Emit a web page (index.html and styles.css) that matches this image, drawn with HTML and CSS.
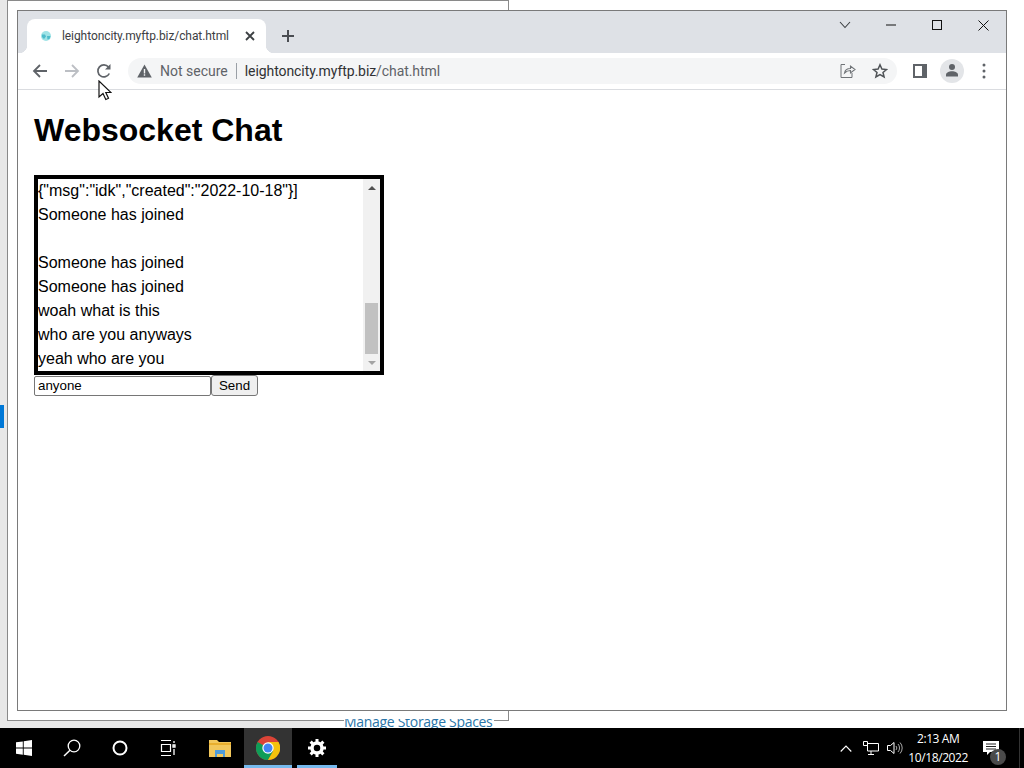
FILE: index.html
```html
<!DOCTYPE html>
<html lang="en">
<head>
<meta charset="utf-8">
<title>Websocket Chat</title>
<link rel="stylesheet" href="styles.css">
</head>
<body>
<div class="screen">
  <main class="desktop">
    <div class="backstrip"></div>
    <div class="backwin"></div>
    <div class="backclip"><a class="backlink">Manage Storage Spaces</a></div>
    <div class="backmark"></div>
    <section class="chrome">
      <header class="titlebar">
        <div class="tab">
          <svg class="favicon" width="16" height="16" viewBox="0 0 16 16"><circle cx="8" cy="8" r="5" fill="#9fe3e6"/><path d="M4 6.500h3l1 2-2 2.500-2-2zM9 8h3.500l-1 3-2 .5z" fill="#4dbccb"/></svg>
          <span class="tabtitle">leightoncity.myftp.biz/chat.html</span>
          <svg class="tabclose" width="10" height="10" viewBox="0 0 10 10"><path d="M1 1l8 8M9 1L1 9" stroke="#3c4043" stroke-width="1.800"/></svg>
        </div>
        <svg class="newtab" width="14" height="14" viewBox="0 0 14 14"><path d="M7 1v12M1 7h12" stroke="#4a4d52" stroke-width="2"/></svg>
        <div class="winctrls">
          <span class="winbtn"><svg width="12" height="8" viewBox="0 0 12 8"><path d="M1 1l5 5.500L11 1" fill="none" stroke="#3c4043" stroke-width="1.100"/></svg></span>
          <span class="winbtn"><svg width="10" height="2" viewBox="0 0 10 2"><path d="M0 1h10" stroke="#111" stroke-width="1"/></svg></span>
          <span class="winbtn"><svg width="10" height="10" viewBox="0 0 10 10"><rect x=".5" y=".5" width="9" height="9" fill="none" stroke="#111"/></svg></span>
          <span class="winbtn"><svg width="11" height="11" viewBox="0 0 11 11"><path d="M.5.500l10 10M10.500.500l-10 10" stroke="#111" stroke-width="1"/></svg></span>
        </div>
      </header>
      <nav class="toolbar">
        <span class="tool"><svg width="16" height="16" viewBox="0 0 16 16"><path d="M15 8H2M8 2L2 8l6 6" fill="none" stroke="#5f6368" stroke-width="1.800"/></svg></span>
        <span class="tool"><svg width="16" height="16" viewBox="0 0 16 16"><path d="M1 8h13M8 2l6 6-6 6" fill="none" stroke="#bcbfc4" stroke-width="1.800"/></svg></span>
        <span class="tool"><svg width="16" height="16" viewBox="0 0 16 16"><path d="M13.300 10.500A6 6 0 1 1 12.500 4" fill="none" stroke="#5f6368" stroke-width="1.700"/><path d="M14.500 1v5.500H9z" fill="#5f6368"/></svg></span>
        <div class="omnibox">
          <svg class="warn" width="15" height="14" viewBox="0 0 15 14"><path d="M7.500 0.500L14.800 13.500H.2z" fill="#5f6368"/><path d="M6.800 5h1.400v4.500H6.800zM6.800 10.300h1.400v1.500H6.800z" fill="#f4f5f6"/></svg>
          <span class="notsecure">Not secure</span>
          <span class="divider"></span>
          <span class="url"><b class="host">leightoncity.myftp.biz</b>/chat.html</span>
          <span class="tool"><svg width="16" height="16" viewBox="0 0 16 16"><path d="M5 1.500H1v13h11V10" fill="none" stroke="#6f7377" stroke-width="1"/><path d="M4.500 10c.5-3 3-4.500 6-4.500V3l4.500 3.500-4.500 3.500V7.500C8 7.500 6 8.500 4.500 10z" fill="none" stroke="#6f7377" stroke-width="1.100"/></svg></span>
          <span class="tool"><svg width="16" height="16" viewBox="0 0 16 16"><path d="M8 1.800l1.900 4.300 4.600.4-3.500 3 1.100 4.500L8 11.600 3.900 14 5 9.500l-3.500-3 4.600-.4z" fill="none" stroke="#4f5357" stroke-width="1.500"/></svg></span>
        </div>
        <span class="tool"><svg width="14" height="14" viewBox="0 0 14 14"><path d="M0 0h14v14H0z" fill="#5f6368"/><path d="M2 2h7v10H2z" fill="#fff"/></svg></span>
        <span class="tool"><span class="avatar"><svg width="14" height="13" viewBox="0 0 14 13"><circle cx="7" cy="3" r="3" fill="#5f6368"/><path d="M1 12.500v-1.500C1 8.500 4 7.300 7 7.300s6 1.200 6 3.700v1.500z" fill="#5f6368"/></svg></span></span>
        <span class="tool"><svg width="4" height="16" viewBox="0 0 4 16"><circle cx="2" cy="2" r="1.500" fill="#5f6368"/><circle cx="2" cy="8" r="1.500" fill="#5f6368"/><circle cx="2" cy="14" r="1.500" fill="#5f6368"/></svg></span>
      </nav>
      <article class="page">
        <h1 class="heading">Websocket Chat</h1>
        <div class="chatbox">
          <div class="messages">
            <div class="msg">{"msg":"idk","created":"2022-10-18"}]</div>
            <div class="msg">Someone has joined</div>
            <div class="msg">&nbsp;</div>
            <div class="msg">Someone has joined</div>
            <div class="msg">Someone has joined</div>
            <div class="msg">woah what is this</div>
            <div class="msg">who are you anyways</div>
            <div class="msg">yeah who are you</div>
          </div>
          <div class="scrollbar">
            <span class="arrow-up"></span>
            <span class="track"><span class="thumb"></span></span>
            <span class="arrow-down"></span>
          </div>
        </div>
        <form class="sendrow">
          <input class="textin" type="text" value="anyone">
          <button class="sendbtn" type="button">Send</button>
        </form>
      </article>
    </section>
    <svg class="cursor" width="14" height="21" viewBox="0 0 14 21"><path d="M1 1v16l4-3.500 2.800 6 2.700-1.200-2.700-5.800H13z" fill="#fff" stroke="#111" stroke-width="1.200"/></svg>
  </main>
  <footer class="taskbar">
    <span class="task"><svg width="16" height="16" viewBox="0 0 16 16"><path d="M0 2.300l6.800-.9v6.200H0zM7.700 1.300L16 0v7.600H7.700zM0 8.500h6.800v6.200L0 13.700zM7.700 8.500H16V16l-8.300-1.200z" fill="#fff"/></svg></span>
    <span class="task"><svg width="18" height="18" viewBox="0 0 18 18"><circle cx="11" cy="7" r="5.800" fill="none" stroke="#fff" stroke-width="1.300"/><path d="M7 11.300L1 17" stroke="#fff" stroke-width="1.500"/></svg></span>
    <span class="task"><svg width="16" height="16" viewBox="0 0 16 16"><circle cx="8" cy="8" r="6.500" fill="none" stroke="#fff" stroke-width="2"/></svg></span>
    <span class="task"><svg width="16" height="16" viewBox="0 0 16 16"><path d="M1 .5h10M1 15.500h10M1.500 4.500h9v7h-9z" fill="none" stroke="#fff" stroke-width="1.200"/><path d="M14 1v2M13 5h2v2h-2zM14 9v6" fill="none" stroke="#fff" stroke-width="1.300"/></svg></span>
    <span class="task task-files"><svg width="22" height="18" viewBox="0 0 22 18"><path d="M0 1h8l2 2h12v15H0z" fill="#f2c75c"/><path d="M0 4h22v2H0z" fill="#e8ae2e"/><path d="M6 11h10v7h-2v-3H8v3H6z" fill="#4f9bd9"/></svg></span>
    <span class="task task-active"><svg width="24" height="24" viewBox="0 0 24 24"><circle cx="12" cy="12" r="12" fill="#db4437"/><path d="M12 12L1.600 6A12 12 0 0 0 12 24l5.200-9z" fill="#0f9d58"/><path d="M12 6h10.500A12 12 0 0 1 12 24l5.200-9z" fill="#f4c20d"/><circle cx="12" cy="12" r="5.700" fill="#fff"/><circle cx="12" cy="12" r="4.500" fill="#4285f4"/></svg></span>
    <span class="task task-open"><svg width="18" height="18" viewBox="0 0 18 18"><circle cx="9" cy="9" r="5" fill="none" stroke="#fff" stroke-width="3.500"/><path d="M9 0v3.500M9 14.500V18M0 9h3.500M14.500 9H18M2.600 2.600l2.500 2.500M12.900 12.900l2.500 2.500M15.400 2.600l-2.500 2.500M5.100 12.900l-2.500 2.500" stroke="#fff" stroke-width="3"/></svg></span>
    <div class="tray">
      <svg width="12" height="7" viewBox="0 0 12 7"><path d="M.7 6.500L6 1l5.300 5.500" fill="none" stroke="#fff" stroke-width="1.100"/></svg>
      <svg class="tray-net" width="16" height="14" viewBox="0 0 16 14"><path d="M4.500 2.500H15.500V10H4.500zM0.500.5h4v4h-4zM8 10v3M5 13.500h6" fill="none" stroke="#fff" stroke-width="1"/></svg>
      <svg class="tray-vol" width="16" height="14" viewBox="0 0 16 14"><path d="M.5 4.500h3L7 1.500v11l-3.500-3h-3z" fill="none" stroke="#fff" stroke-width="1"/><path d="M9 5a3 3 0 0 1 0 4M11 3a6 6 0 0 1 0 8M13 1.500a8 8 0 0 1 0 11" fill="none" stroke="#aaa" stroke-width="1"/></svg>
      <div class="clock"><span>2:13 AM</span><span>10/18/2022</span></div>
      <span class="notify">
        <svg width="16" height="15" viewBox="0 0 16 15"><path d="M0 0h16v11H7l-3 3v-3H0z" fill="#fff"/><path d="M3 3h10M3 5.500h10M3 8h10" stroke="#222" stroke-width="1"/></svg>
        <span class="badge">1</span>
      </span>
    </div>
  </footer>
</div>
</body>
</html>
```

FILE: styles.css
```css
* { box-sizing: border-box; }
html, body { margin: 0; padding: 0; }
body { width: 1024px; height: 768px; overflow: hidden; font-family: "Liberation Sans", Arial, sans-serif; }
.screen { width: 1024px; height: 768px; display: flex; flex-direction: column; background: #fff; }

.desktop { position: relative; flex: 1; min-height: 0; overflow: hidden; background: #fff; }
.backstrip { position: absolute; left: 0; top: 720px; width: 320px; height: 8px; background: #e8e8e8; }
.backwin { position: absolute; left: 7px; top: 0; width: 502px; height: 721px; background: #fff; border: 1px solid #8a8a8a; box-shadow: -7px 0 0 #e8e8e8; }
.backclip { position: absolute; left: 344px; top: 719px; width: 150px; height: 9px; overflow: hidden; background: #fff; }
.backlink { display: block; margin-top: -6px; font: 14px/17px "Open Sans", sans-serif; color: #2a75a8; white-space: nowrap; letter-spacing: -.3px; }
.backmark { position: absolute; left: 0; top: 405px; width: 4px; height: 23px; background: #0078d7; }

.chrome { position: absolute; left: 17px; top: 10px; width: 990px; height: 701px; background: #fff; border: 1px solid #7a7a7a; display: flex; flex-direction: column; }
.titlebar { height: 42px; background: #dee1e6; display: flex; align-items: flex-end; padding-left: 9px; flex-shrink: 0; }
.tab { position: relative; width: 239px; height: 34px; background: #fff; border-radius: 8px 8px 0 0; display: flex; align-items: center; padding: 0 11px; }
.tab::before, .tab::after { content: ""; position: absolute; bottom: 0; width: 8px; height: 8px; }
.tab::before { left: -8px; background: radial-gradient(circle at 0 0, transparent 8px, #fff 8.500px); }
.tab::after { right: -8px; background: radial-gradient(circle at 100% 0, transparent 8px, #fff 8.500px); }
.favicon { flex-shrink: 0; }
.tabtitle { font: 12px/16px Roboto, sans-serif; color: #3c4043; margin-left: 8px; flex: 1; white-space: nowrap; letter-spacing: -.08px; }
.tabclose { flex-shrink: 0; }
.newtab { align-self: center; margin: 8px 0 0 15px; }
.winctrls { margin-left: auto; align-self: flex-start; display: flex; }
.winbtn { width: 46px; height: 28px; display: flex; align-items: center; justify-content: center; }

.toolbar { height: 37px; background: #fff; border-bottom: 1px solid #dadce0; display: flex; align-items: center; padding: 0 5px 1px 6px; flex-shrink: 0; }
.tool { width: 32px; height: 32px; display: flex; align-items: center; justify-content: center; flex-shrink: 0; }
.avatar { width: 24px; height: 24px; border-radius: 50%; background: #e3e5e8; display: flex; align-items: center; justify-content: center; }
.omnibox { width: 769px; height: 26px; margin: 0 7px 0 8px; flex-shrink: 0; background: #f4f5f6; border-radius: 13px; display: flex; align-items: center; padding: 0 1px 0 9px; }
.warn { flex-shrink: 0; }
.notsecure { font: 14px/18px Roboto, sans-serif; color: #5f6368; margin-left: 8px; white-space: nowrap; }
.divider { width: 1px; height: 16px; background: #9aa0a6; margin: 0 8px 0 8px; }
.url { flex: 1; font: 14px/18px Roboto, sans-serif; color: #5f6368; white-space: nowrap; letter-spacing: -.08px; }
.host { font-weight: 400; color: #303134; }

.page { flex: 1; min-height: 0; background: #fff; padding: 0 16px; }
.heading { margin: 22px 0 26px; font: bold 32px/37px "Liberation Sans", Arial, sans-serif; color: #000; }
.chatbox { width: 350px; height: 200px; border: 4px solid #000; display: flex; background: #fff; overflow: hidden; }
.messages { flex: 1; min-width: 0; font-size: 16px; line-height: 24px; color: #000; }
.msg { white-space: nowrap; height: 24px; }
.scrollbar { width: 17px; flex-shrink: 0; background: #f1f1f1; display: flex; flex-direction: column; }
.arrow-up, .arrow-down { height: 17px; flex-shrink: 0; display: flex; align-items: center; justify-content: center; }
.arrow-up::before { content: ""; border: 4px solid transparent; border-top: 0; border-bottom: 4px solid #505050; }
.arrow-down::before { content: ""; border: 4px solid transparent; border-bottom: 0; border-top: 4px solid #a3a3a3; }
.track { flex: 1; display: flex; flex-direction: column; justify-content: flex-end; padding: 0 2px; }
.thumb { height: 51px; background: #c1c1c1; }

.sendrow { display: flex; align-items: flex-start; }
.textin { width: 177px; height: 20px; margin: 1px 0 0; padding: 0 3px 1px; border: 1px solid #767676; border-radius: 2px; background: #fff; font: 13.333px "Liberation Sans", Arial, sans-serif; color: #000; }
.sendbtn { width: 47px; height: 21px; margin: 0; padding: 0; border: 1px solid #767676; border-radius: 3px; background: #efefef; font: 13.333px "Liberation Sans", Arial, sans-serif; color: #000; }

.cursor { position: absolute; left: 98px; top: 80px; }

.taskbar { height: 40px; background: #000; display: flex; align-items: stretch; flex-shrink: 0; }
.task { width: 48px; display: flex; align-items: center; justify-content: center; flex-shrink: 0; }
.task-files { width: 52px; padding-left: 3px; }
.task-active { background: #333; border-bottom: 3px solid #76b9ed; padding-top: 3px; }
.task-open { width: 40px; margin-left: 5px; border-bottom: 3px solid #76b9ed; padding-top: 3px; }
.tray { margin: 0 4px 0 auto; display: flex; align-items: center; padding-right: 20px; border-right: 1px solid #333; }
.tray-net { margin-left: 11px; }
.tray-vol { margin-left: 8px; }
.clock { display: flex; flex-direction: column; align-items: center; margin-left: 5px; font: 12px/19px "Open Sans", sans-serif; color: #fff; letter-spacing: -.4px; }
.notify { position: relative; display: flex; margin-left: 15px; }
.badge { position: absolute; left: 7px; top: 8px; width: 16px; height: 16px; border-radius: 50%; background: #4a4a4a; color: #fff; font: 12px/16px "Open Sans", sans-serif; text-align: center; }
```
